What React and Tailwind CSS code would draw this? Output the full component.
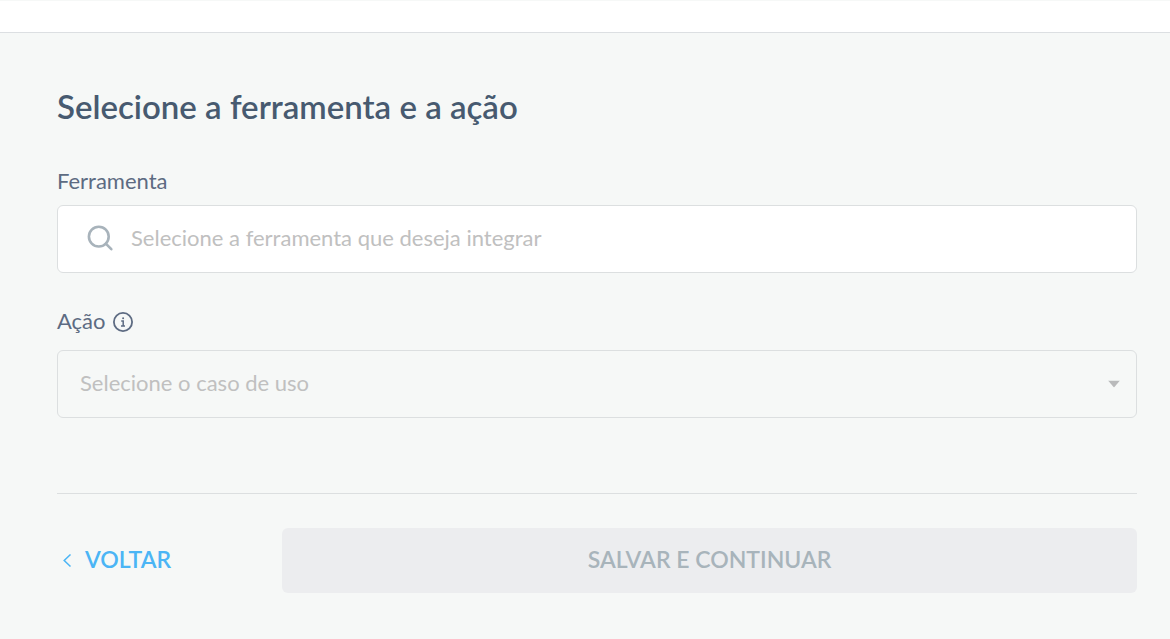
import { useState } from 'react'

function SearchIcon() {
    return (
        <svg className="w-7 h-7 shrink-0 text-[#a8b3bb]" viewBox="0 0 28 28" fill="none" stroke="currentColor" strokeWidth="2.6" aria-hidden="true">
            <circle cx="11.8" cy="11.6" r="9.9" />
            <path d="M18.8 18.6L24.3 24.2" strokeLinecap="round" />
        </svg>
    );
}

function InfoIcon() {
    return (
        <svg className="w-5 h-5" viewBox="0 0 20 20" fill="none" stroke="currentColor" aria-hidden="true">
            <circle cx="10" cy="10" r="9.1" strokeWidth="1.8" />
            <path d="M8.2 9H10.2V14M8 14.1H12" strokeWidth="1.5" />
            <circle cx="10.1" cy="6.3" r="1" fill="currentColor" stroke="none" />
        </svg>
    );
}

function App() {
    const [tool, setTool] = useState('');

    return (
        <div className="min-h-screen bg-[#f6f8f7] font-[Lato,sans-serif] text-[#5d6b82]">
            <header className="h-[33px] bg-white border-t border-t-[#f6f8f7] border-b border-b-[#dcdfe2]"></header>

            <main className="pl-[57px] pr-[33px] pt-[53px]">
                <h1 className="text-[33px] leading-10 font-semibold text-[#475a70]">
                    Selecione a ferramenta e a ação
                </h1>

                <form onSubmit={(event) => event.preventDefault()}>
                    {/* Ferramenta */}
                    <label htmlFor="tool" className="block mt-[41px] text-[22px] leading-7">Ferramenta</label>
                    <div className="mt-2.5 h-[68px] flex items-center gap-4 px-[29px] bg-white border border-[#dcdfe0] rounded-md">
                        <SearchIcon />
                        <input
                            id="tool"
                            type="text"
                            value={tool}
                            onChange={(event) => setTool(event.target.value)}
                            placeholder="Selecione a ferramenta que deseja integrar"
                            className="flex-1 min-w-0 h-full pb-1 text-[22px] leading-7 outline-none placeholder:text-[#c0c0c0]"
                        />
                    </div>

                    {/* Ação */}
                    <div className="mt-[34px] flex items-center gap-[7px] text-[22px] leading-7">
                        <label htmlFor="action">Ação</label>
                        <button type="button" aria-label="Info" className="pt-px"><InfoIcon /></button>
                    </div>
                    <div className="relative mt-[15px]">
                        <select
                            id="action"
                            disabled
                            className="w-full h-[68px] pb-0.5 pl-[22px] pr-12 appearance-none text-[22px] leading-7 text-[#c0c0c0] opacity-100 border border-[#dcdfe0] rounded-md"
                        >
                            <option>Selecione o caso de uso</option>
                        </select>
                        <svg className="absolute right-[17px] top-1/2 -translate-y-1/2 w-3 h-[7px] text-[#b9babb] pointer-events-none" viewBox="0 0 12 7" fill="currentColor" aria-hidden="true">
                            <path d="M0 0H12L6 7Z" />
                        </svg>
                    </div>

                    {/* Actions */}
                    <div className="mt-[75px] pt-[34px] flex border-t border-[#dcdfe0]">
                        <div className="w-[225px] shrink-0 flex">
                            <button type="button" className="flex items-center gap-3 pl-1 pb-1 text-[23px] leading-7 font-semibold text-[#4bb5f5]">
                                <svg className="w-3 h-3.5 mt-1" viewBox="0 0 12 14" fill="none" stroke="currentColor" strokeWidth="1.5" aria-hidden="true">
                                    <path d="M9.5 0.5L3.2 6.5L9.5 12.5" />
                                </svg>
                                VOLTAR
                            </button>
                        </div>
                        <button type="submit" disabled className="flex-1 h-[65px] pb-1 rounded-md bg-[#ecedef] text-[23px] leading-7 font-semibold text-[#a8b4bb]">
                            SALVAR E CONTINUAR
                        </button>
                    </div>
                </form>
            </main>
        </div>
    );
}

export default App;
